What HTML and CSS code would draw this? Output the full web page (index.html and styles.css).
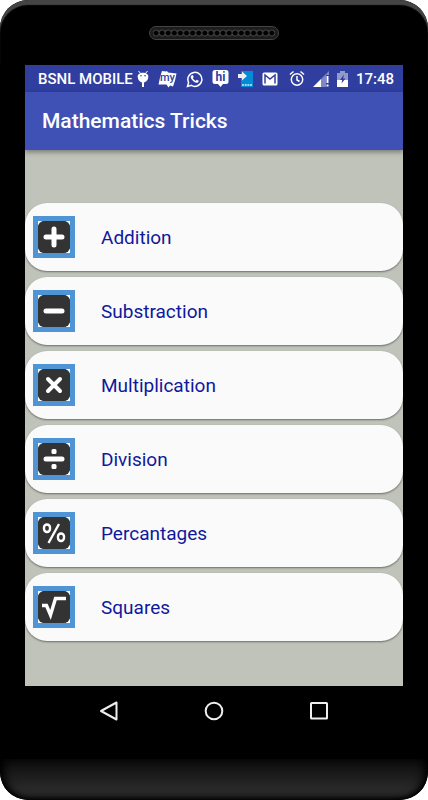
FILE: index.html
```html
<!DOCTYPE html>
<html lang="en">
<head>
<meta charset="utf-8">
<meta name="viewport" content="width=device-width, initial-scale=1">
<title>Mathematics Tricks</title>
<link rel="stylesheet" href="styles.css">
</head>
<body>
<div class="phone">
  <div class="forehead">
    <div class="speaker"><div class="holes"></div></div>
  </div>
  <div class="screen">
    <div class="status">
      <span class="carrier">BSNL MOBILE</span>
      <div class="notifications">
        <svg class="glyph" width="12" height="18" viewBox="0 0 12 18"><path d="M1.500 1l2.500 3M10.500 1L8 4" stroke="#fff" stroke-width="1"/><path d="M.7 6.500C.7 1.500 11.300 1.500 11.300 6.500 11.300 10 9 12.500 6 12.500S.7 10 .7 6.500z" fill="#fff"/><path d="M6 11v6" stroke="#fff" stroke-width="2"/><circle cx="4" cy="5.700" r=".8" fill="#303f9f"/><circle cx="8" cy="5.700" r=".8" fill="#303f9f"/></svg>
        <svg class="glyph" width="19" height="18" viewBox="0 0 19 18"><path d="M4 1l4 .5 1-.5 1 1.500 8.500 1-1.500 7-2 6-3-1-1.500 2-2-3-8 0 1.500-7z" fill="#fff"/><text x="9.500" y="11" class="my">my</text></svg>
        <svg class="glyph" width="17" height="18" viewBox="0 0 17 18"><path d="M1.500 16.500l1.100-4A7 7 0 1 1 5.300 15.400z" fill="none" stroke="#fff" stroke-width="1.500"/><path d="M5.500 5.500q1-1 1.500 0l.7 1.600-.9 1.200q1 1.800 2.900 2.600l1-1.100 2 1q.2 1.300-1.300 1.900-1.500.4-4-1.500-2.700-2.300-2.700-4 0-1 .8-1.700z" fill="#fff"/></svg>
        <svg class="glyph" width="17" height="19" viewBox="0 0 17 19"><path d="M3 1h11a2.500 2.500 0 0 1 2.500 2.500v9A2.500 2.500 0 0 1 14 15h-3l-2.500 3L6 15H3A2.500 2.500 0 0 1 .5 12.500v-9A2.500 2.500 0 0 1 3 1z" fill="#fff"/><text x="8.500" y="12" class="hi">hi</text></svg>
        <svg class="glyph" width="15" height="18" viewBox="0 0 15 18"><path d="M3 1h12v16H3z" fill="#038bd5"/><path d="M0 4h4V1.500L9 6l-5 4.500V8H0z" fill="#eee"/><path d="M4 15h10" stroke="#9cd8f5" stroke-width="2" stroke-dasharray="2 .7"/></svg>
        <svg class="glyph" width="16" height="14" viewBox="0 0 16 14"><rect x=".5" y=".5" width="15" height="13" rx="1.500" fill="#fff"/><path d="M3 11.500V3l5 4 5-4v8.500" fill="none" stroke="#303f9f" stroke-width="1.500"/></svg>
      </div>
      <div class="system">
        <svg class="glyph" width="16" height="17" viewBox="0 0 16 17"><circle cx="8" cy="9.500" r="5.700" fill="none" stroke="#fff" stroke-width="1.500"/><path d="M1 4.500L4.500 1.500M15 4.500L11.500 1.500M8 6v4l2.500 1.500" fill="none" stroke="#fff" stroke-width="1.500"/></svg>
        <svg class="glyph" width="16" height="16" viewBox="0 0 16 16"><path d="M8 8l8-8v4h-3v12H8z" fill="#7f89c6"/><path d="M0 16l8-8v8z" fill="#fff"/><path d="M14.500 5v7M14.500 13.500v2" stroke="#fff" stroke-width="2"/></svg>
        <svg class="glyph" width="11" height="16" viewBox="0 0 11 16"><path d="M3 0h5v2h3v7H0V2h3z" fill="#929ac9"/><path d="M0 9h11v7H0z" fill="#fff"/><path d="M7 3.500L3 9h2.200L4.500 12.500 8.500 7.500H6.200z" fill="#303f9f"/></svg>
        <span class="clock">17:48</span>
      </div>
    </div>
    <header class="toolbar"><h1>Mathematics Tricks</h1></header>
    <main class="topics">
      <a class="card" href="#addition">
        <svg class="tile" viewBox="0 0 42 42"><path class="corners" d="M5 5h4v4H5zM33 5h4v4h-4zM5 33h4v4H5zM33 33h4v4h-4z"/><rect class="key" x="5" y="5" width="32" height="32" rx="6"/><path class="bold" d="M21 13v16M13 21h16"/></svg>
        <span>Addition</span></a>
      <a class="card" href="#substraction">
        <svg class="tile" viewBox="0 0 42 42"><path class="corners" d="M5 5h4v4H5zM33 5h4v4h-4zM5 33h4v4H5zM33 33h4v4h-4z"/><rect class="key" x="5" y="5" width="32" height="32" rx="6"/><path class="bold" d="M13 21h16"/></svg>
        <span>Substraction</span></a>
      <a class="card" href="#multiplication">
        <svg class="tile" viewBox="0 0 42 42"><path class="corners" d="M5 5h4v4H5zM33 5h4v4h-4zM5 33h4v4H5zM33 33h4v4h-4z"/><rect class="key" x="5" y="5" width="32" height="32" rx="6"/><path class="cross" d="M15 15l12 12M27 15L15 27"/></svg>
        <span>Multiplication</span></a>
      <a class="card" href="#division">
        <svg class="tile" viewBox="0 0 42 42"><path class="corners" d="M5 5h4v4H5zM33 5h4v4h-4zM5 33h4v4H5zM33 33h4v4h-4z"/><rect class="key" x="5" y="5" width="32" height="32" rx="6"/><path class="bold" d="M13 21h16"/><rect class="dot" x="18.500" y="11" width="5" height="5" rx="1.500"/><rect class="dot" x="18.500" y="26" width="5" height="5" rx="1.500"/></svg>
        <span>Division</span></a>
      <a class="card" href="#percantages">
        <svg class="tile" viewBox="0 0 42 42"><path class="corners" d="M5 5h4v4H5zM33 5h4v4h-4zM5 33h4v4H5zM33 33h4v4h-4z"/><rect class="key" x="5" y="5" width="32" height="32" rx="6"/><path class="thin" d="M26 12L15.500 31"/><rect class="thin" x="11" y="12.500" width="6" height="7.500" rx="3"/><rect class="thin" x="25" y="21.500" width="6" height="7.500" rx="3"/></svg>
        <span>Percantages</span></a>
      <a class="card" href="#squares">
        <svg class="tile" viewBox="0 0 42 42"><path class="corners" d="M5 5h4v4H5zM33 5h4v4h-4zM5 33h4v4H5zM33 33h4v4h-4z"/><rect class="key" x="5" y="5" width="32" height="32" rx="6"/><path class="root" d="M9 19.500h4.500L17.500 29l5-16.500H33"/></svg>
        <span>Squares</span></a>
    </main>
  </div>
  <nav class="navbar">
    <button type="button" aria-label="Back"><svg width="22" height="22" viewBox="0 0 22 22"><path d="M18.500 2.500v17L3 11z"/></svg></button>
    <button type="button" aria-label="Home"><svg width="22" height="22" viewBox="0 0 22 22"><circle cx="11" cy="11" r="8.300"/></svg></button>
    <button type="button" aria-label="Recent apps"><svg width="22" height="22" viewBox="0 0 22 22"><rect x="3" y="3" width="16" height="15.500" rx=".5"/></svg></button>
  </nav>
  <div class="chin"></div>
</div>
</body>
</html>
```
FILE: styles.css
```css
* { box-sizing: border-box; }

body {
  margin: 0;
  background: #fff;
  font-family: Roboto, "Liberation Sans", sans-serif;
}

.phone {
  display: flex;
  flex-direction: column;
  min-height: 100vh;
  background: #000;
  border-radius: 28px;
  overflow: hidden;
}

.forehead {
  height: 65px;
  padding-top: 26px;
  border-radius: 28px 28px 0 0;
  box-shadow: inset 0 5px 1px #444;
}

.speaker {
  width: 130px;
  margin: 0 auto;
  padding: 2px 3px;
  border: 1px solid #444;
  border-radius: 7px;
  background: #1c1c1c;
}

.holes {
  height: 8px;
  background: radial-gradient(circle at center, #000 2px, #444 3px, #1c1c1c 4px) 0 0 / 6px 8px round;
}

.screen {
  flex: 1;
  display: flex;
  flex-direction: column;
  margin: 0 25px;
  background: #c0c3b9;
}

.status {
  display: flex;
  align-items: center;
  gap: 4px;
  height: 27px;
  padding: 0 9px 0 13px;
  background: #303f9f;
  color: #fff;
  font-size: 15px;
  font-weight: 500;
  white-space: nowrap;
}

.glyph { display: block; flex: none; }

.notifications {
  display: flex;
  align-items: center;
  gap: 9px;
}

.system {
  display: flex;
  align-items: center;
  gap: 8px;
  margin-left: auto;
}

.my, .hi {
  text-anchor: middle;
  fill: #303f9f;
}

.my { font-size: 11px; font-weight: 500; }
.hi { font-size: 12px; font-weight: 700; }

.toolbar {
  display: flex;
  align-items: center;
  height: 58px;
  padding: 0 17px;
  background: #3f51b5;
  box-shadow: 0 2px 5px rgba(0, 0, 0, .4);
}

h1 {
  margin: 0;
  color: #fff;
  font-size: 21px;
  font-weight: 500;
}

.topics {
  flex: 1;
  display: flex;
  flex-direction: column;
  justify-content: center;
  gap: 6px;
  padding: 8px 0 0;
}

.card {
  display: flex;
  align-items: center;
  gap: 26px;
  height: 68px;
  padding: 0 8px;
  border-radius: 22px;
  background: #fafafa;
  box-shadow: 0 1px 2px rgba(0, 0, 0, .45);
  color: #10189c;
  font-size: 19px;
  text-decoration: none;
}

.tile {
  width: 42px;
  height: 42px;
  background: #4f94d4;
}

.key { fill: #333; }
.corners { fill: #fff; }
.bold, .cross { fill: none; stroke: #fff; stroke-width: 5; stroke-linecap: round; }
.cross { stroke-width: 4; }
.dot { fill: #fff; }
.thin { fill: none; stroke: #fff; stroke-width: 2.4; }
.root { fill: none; stroke: #fff; stroke-width: 3.4; }

.navbar {
  display: flex;
  justify-content: center;
  gap: 83px;
  height: 73px;
  padding-top: 14px;
}

.navbar button {
  width: 22px;
  height: 22px;
  padding: 0;
  border: 0;
  background: none;
}

.navbar svg {
  display: block;
  fill: none;
  stroke: #eee;
  stroke-width: 2;
  stroke-linejoin: round;
}

.chin {
  height: 41px;
  border-radius: 0 0 28px 28px;
  background: linear-gradient(#0b0b0b, #282828 70%);
  box-shadow: inset 8px 0 10px -4px #000, inset -8px 0 10px -4px #000, inset 0 -3px 5px -1px #000;
}
```
